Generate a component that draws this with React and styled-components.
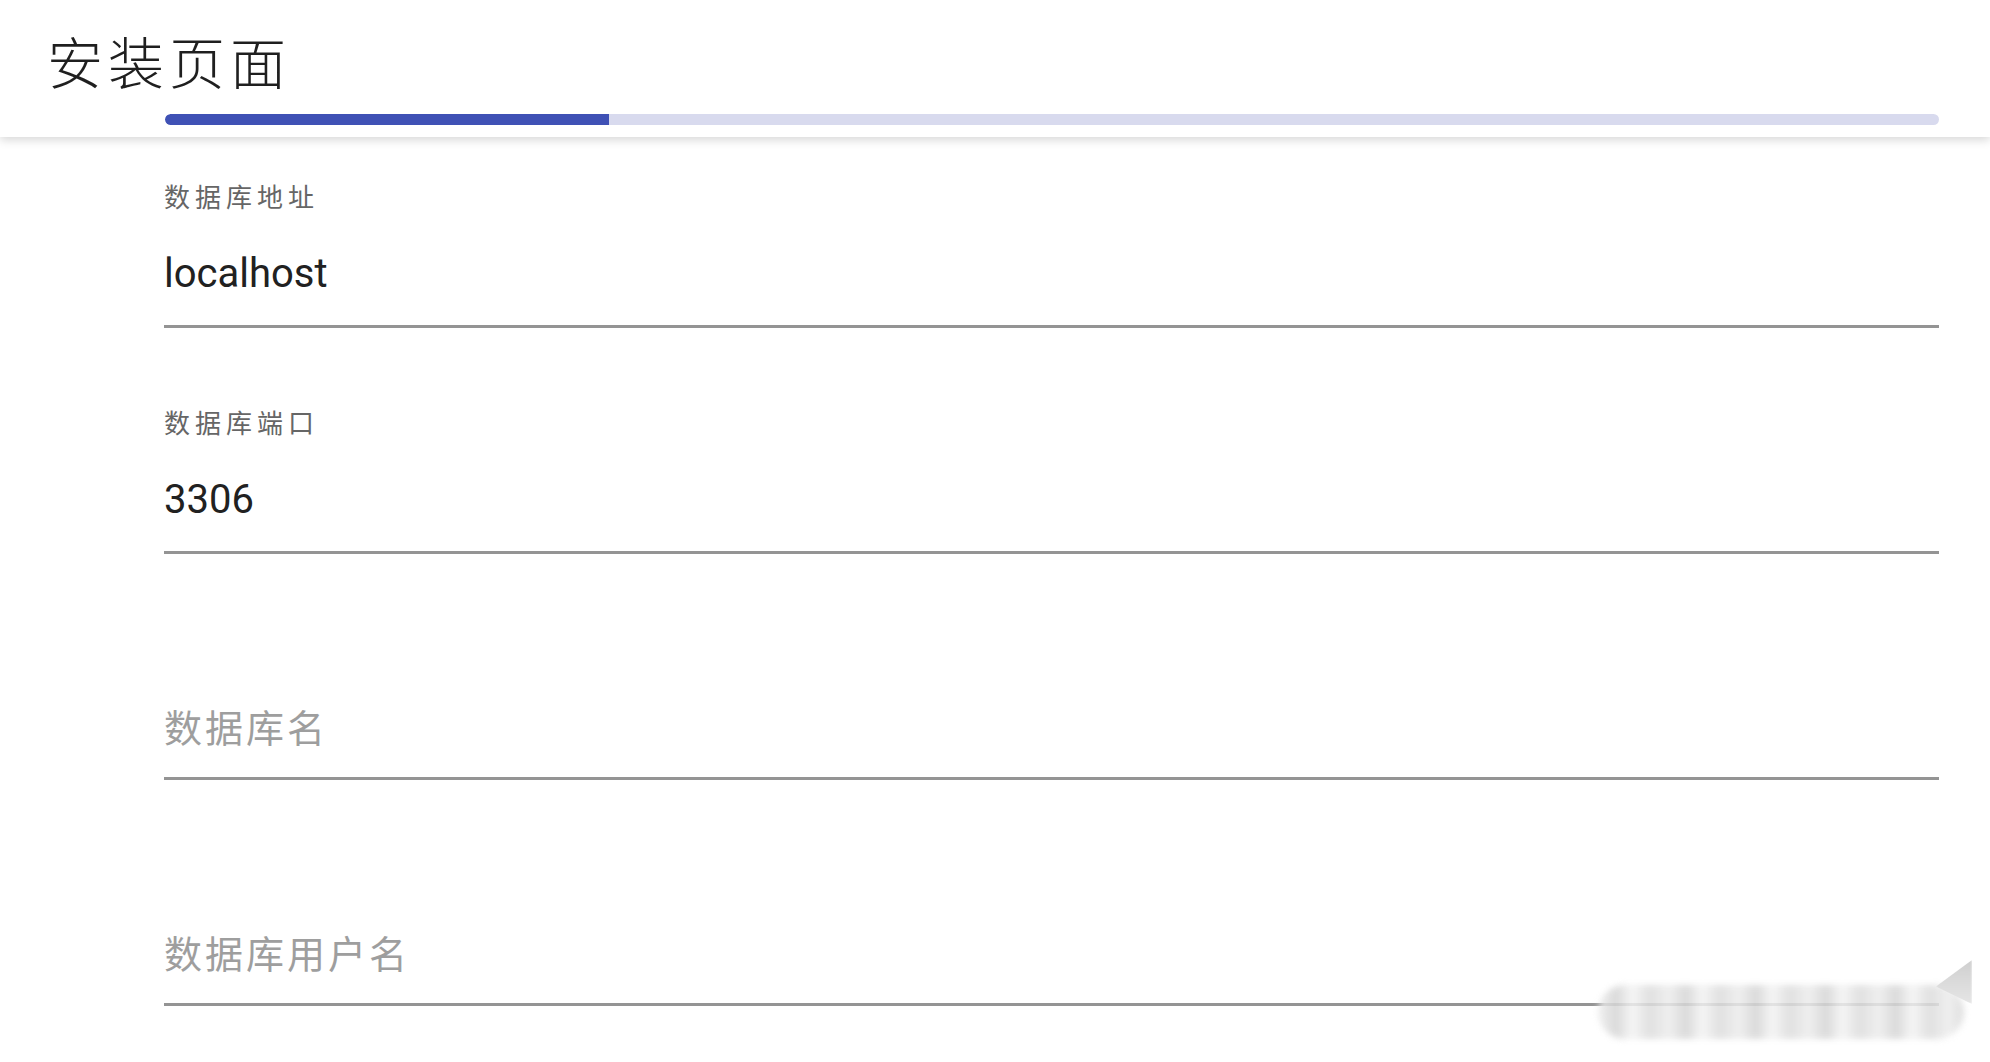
import React from 'react';
import styled, { createGlobalStyle } from 'styled-components';

const GlobalStyle = createGlobalStyle`
    html, body {
        margin: 0;
        padding: 0;
        background: #ffffff;
        font-family: Roboto, "Noto Sans CJK SC", sans-serif;
        overflow: hidden;
    }
`;

const Page = styled.div`
    position: relative;
    width: 1990px;
    height: 1062px;
    overflow: hidden;
    background: #ffffff;
`;

const Header = styled.header`
    position: relative;
    z-index: 2;
    background: #ffffff;
    padding: 33px 51px 12px 47px;
    box-shadow: 0 3px 9px rgba(0, 0, 0, 0.16);
`;

const Title = styled.h1`
    margin: 0;
    font-family: Roboto, "Noto Sans CJK SC", sans-serif;
    font-size: 56px;
    line-height: 64px;
    font-weight: 300;
    letter-spacing: 5px;
    color: #1f1f1f;
`;

const Track = styled.div`
    margin: 17px 0 0 118px;
    height: 11px;
    border-radius: 6px;
    background: #d8daee;
    overflow: hidden;
`;

const Fill = styled.div`
    height: 100%;
    background: #3f51b5;
    border-radius: 6px 0 0 6px;
`;

const Form = styled.main`
    display: flex;
    flex-direction: column;
    gap: 80px;
    padding: 45px 51px 0 164px;
`;

const Field = styled.div`
    display: flex;
    flex-direction: column;
`;

const Label = styled.label`
    height: 32px;
    line-height: 32px;
    font-size: 26px;
    letter-spacing: 5px;
    color: #666666;
`;

const InputRow = styled.div`
    margin-top: 29px;
    height: 60px;
    display: flex;
    align-items: center;
    font-size: ${p => (p.$placeholder ? '38px' : '40px')};
    letter-spacing: ${p => (p.$placeholder ? '3px' : '0')};
    color: ${p => (p.$placeholder ? '#9e9e9e' : '#212121')};
`;

const Underline = styled.div`
    margin-top: 22px;
    height: 3px;
    background: #949494;
`;

const Smudge = styled.div`
    position: absolute;
    left: 1598px;
    top: 985px;
    width: 366px;
    height: 54px;
    border-radius: 27px;
    filter: blur(3px);
    background: repeating-linear-gradient(
        90deg,
        #eeeeee 0px,
        #d4d4d4 18px,
        #f4f4f4 34px,
        #dcdcdc 52px,
        #ececec 70px
    );
    opacity: 0.85;
`;

const SmudgeTip = styled.div`
    position: absolute;
    left: 1936px;
    top: 960px;
    width: 36px;
    height: 44px;
    background: linear-gradient(180deg, #cfcfcf, #e6e6e6);
    clip-path: polygon(100% 0, 100% 100%, 0 60%);
    filter: blur(1px);
`;

const fields = [
    { label: '数据库地址', value: 'localhost' },
    { label: '数据库端口', value: '3306' },
    { label: '数据库名', value: '' },
    { label: '数据库用户名', value: '' },
];

function App() {
    const progress = 25;
    return (
        <Page>
            <GlobalStyle />
            <Header>
                <Title>安装页面</Title>
                <Track>
                    <Fill style={{ width: `${progress}%` }} />
                </Track>
            </Header>
            <Form>
                {fields.map(f => (
                    <Field key={f.label}>
                        <Label>{f.value ? f.label : ''}</Label>
                        <InputRow $placeholder={!f.value}>{f.value || f.label}</InputRow>
                        <Underline />
                    </Field>
                ))}
            </Form>
            <Smudge />
            <SmudgeTip />
        </Page>
    );
}

export default App;
